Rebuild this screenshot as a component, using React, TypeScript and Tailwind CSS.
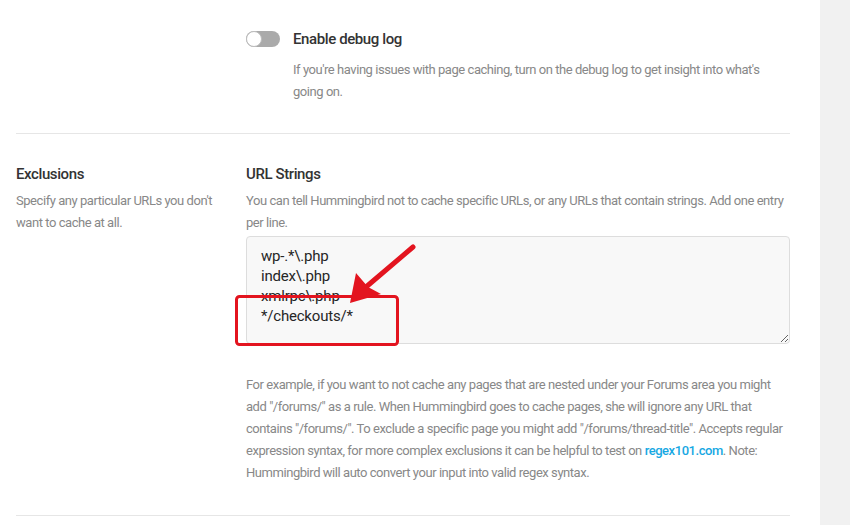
import React from 'react';

const urlList = ['wp-.*\\.php', 'index\\.php', 'xmlrpc\\.php', '*/checkouts/*'].join('\n');

function Toggle() {
  return (
    <div className="relative w-[34px] h-[16px] rounded-full bg-[#aaaaaa] shrink-0">
      <div className="absolute left-0 top-0 w-[16px] h-[16px] rounded-full bg-white border border-[#bdbdbd]" />
    </div>
  );
}

export default function App() {
  return (
    <div className="relative flex w-[850px] h-[525px] overflow-hidden font-['Roboto',sans-serif]">
      <div className="w-[820px] h-full bg-white pl-4 pr-[30px]">
        {/* debug log */}
        <div className="flex pt-[28px] pb-[30px] border-b border-[#e6e6e6]">
          <div className="w-[230px] shrink-0" />
          <div className="flex-1">
            <div className="flex items-center h-[22px]">
              <Toggle />
              <span className="ml-[13px] text-[15px] font-medium tracking-[-0.4px] text-[#333333] leading-[22px]">Enable debug log</span>
            </div>
            <p className="mt-[9px] pl-[47px] text-[13px] leading-[22px] tracking-[-0.45px] text-[#888888]">
              If you're having issues with page caching, turn on the debug log to get insight into what's going on.
            </p>
          </div>
        </div>

        {/* exclusions */}
        <div className="flex pt-[29px] pb-[31px] border-b border-[#e6e6e6]">
          <div className="w-[230px] shrink-0 pr-4">
            <h3 className="text-[15px] font-medium tracking-[-0.4px] text-[#333333] leading-[22px]">Exclusions</h3>
            <p className="mt-[5px] text-[13px] leading-[22px] tracking-[-0.45px] text-[#888888]">
              Specify any particular URLs you don't want to cache at all.
            </p>
          </div>
          <div className="flex-1">
            <h4 className="text-[15px] font-medium tracking-[-0.4px] text-[#333333] leading-[22px]">URL Strings</h4>
            <p className="mt-[5px] text-[13px] leading-[22px] tracking-[-0.45px] text-[#888888]">
              You can tell Hummingbird not to cache specific URLs, or any URLs that contain strings. Add one entry per line.
            </p>
            <textarea
              readOnly
              value={urlList}
              className="mt-[2px] block w-full h-[108px] rounded-[4px] border border-[#dddddd] bg-[#f8f8f8] px-[14px] pt-[9px] text-[15px] leading-[20px] tracking-[-0.2px] text-[#262626] font-['Roboto',sans-serif] outline-none"
            />
            <p className="mt-[30px] text-[13px] leading-[22px] tracking-[-0.45px] text-[#888888]">
              For example, if you want to not cache any pages that are nested under your Forums area you might add "/forums/" as a rule. When Hummingbird goes to cache pages, she will ignore any URL that contains "/forums/". To exclude a specific page you might add "/forums/thread-title". Accepts regular expression syntax, for more complex exclusions it can be helpful to test on <a className="text-[#17a8e3] font-medium">regex101.com</a>. Note: Hummingbird will auto convert your input into valid regex syntax.
            </p>
          </div>
        </div>
      </div>
      <div className="flex-1 h-full bg-[#f1f1f1]" />

      {/* annotation overlay */}
      <svg className="absolute inset-0 pointer-events-none" width="850" height="525" viewBox="0 0 850 525">
        <rect x="236.5" y="296.5" width="161" height="48" rx="3" fill="none" stroke="#e3141f" strokeWidth="3" />
        <line x1="413" y1="247" x2="366" y2="287" stroke="#e3141f" strokeWidth="5" strokeLinecap="round" />
        <polygon points="350,303 356,273 368,287 381,294" fill="#e3141f" />
      </svg>
    </div>
  );
}
